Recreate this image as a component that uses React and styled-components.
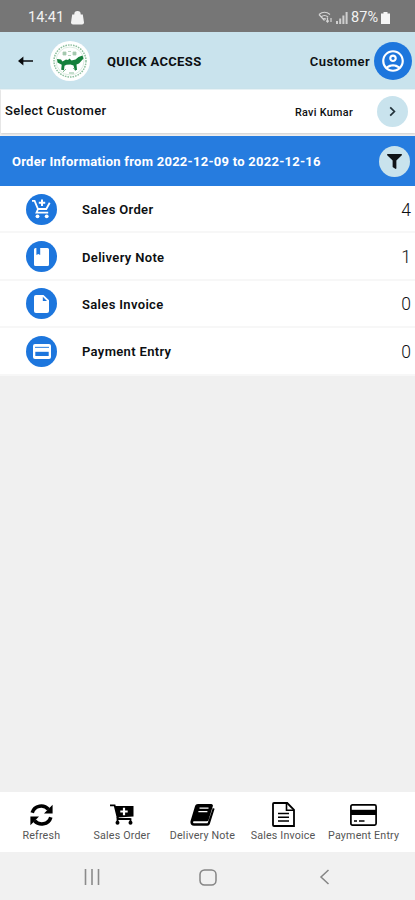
import styled, { createGlobalStyle } from "styled-components";
import { FaFilter } from "react-icons/fa";
import { MdOutlineAccountCircle } from "react-icons/md";

const GlobalStyle = createGlobalStyle`
    * {
        box-sizing: border-box;
    }

    body {
        margin: 0;
        background: #f0f0f0;
        font-family: Roboto, "Liberation Sans", sans-serif;
    }
`;

const Screen = styled.div`
    width: 415px;
    height: 900px;
    display: flex;
    flex-direction: column;
    overflow: hidden;
    background: #f0f0f0;
    color: #0c0f12;

    && svg {
        display: block;
        flex-shrink: 0;
    }
`;

const StatusBar = styled.div`
    height: 32px;
    padding: 3px 25px 0 28px;
    display: flex;
    align-items: center;
    justify-content: space-between;
    background: #767676;
    color: #f2f2f2;
    font-size: 14.5px;
`;

const StatusGroup = styled.div`
    display: flex;
    align-items: center;
    column-gap: ${props => props.gap};
`;

const Header = styled.header`
    height: 57px;
    padding: 1px 3px 0 18px;
    display: flex;
    align-items: center;
    background: #c9e3ed;
`;

const Logo = styled.div`
    width: 40px;
    height: 40px;
    margin-left: 17px;
    display: flex;
    align-items: center;
    justify-content: center;
    border-radius: 50%;
    background: white;
`;

const Title = styled.h1`
    margin: 0 auto 0 17px;
    font-size: 13px;
    font-weight: 700;
    letter-spacing: 0.35px;
    white-space: nowrap;
`;

const Role = styled.span`
    margin-right: 4px;
    font-size: 13px;
    font-weight: 600;
    letter-spacing: 0.4px;
`;

const Round = styled.div`
    width: ${props => props.size}px;
    height: ${props => props.size}px;
    flex-shrink: 0;
    display: flex;
    align-items: center;
    justify-content: center;
    border-radius: 50%;
    background: ${props => props.light ? "#c9e3ed" : "#1d76dd"};
    color: ${props => props.light ? "#101417" : "white"};
`;

const SelectRow = styled.div`
    height: 44px;
    margin: 0 0 3px 1px;
    padding: 0 7px 0 4px;
    display: flex;
    align-items: center;
    background: white;
    border-top: 1px solid #e8f2f5;
    box-shadow: 0 1px 2px #cfcfcf;
`;

const SelectLabel = styled.span`
    margin: 0 auto 3px 0;
    font-size: 13px;
    font-weight: 500;
    letter-spacing: 0.34px;
`;

const SelectValue = styled.span`
    margin: 2px 24px 0 0;
    font-size: 10.8px;
    font-weight: 500;
    letter-spacing: 0.3px;
`;

const Period = styled.div`
    height: 50px;
    padding: 0 5px 0 12px;
    display: flex;
    align-items: center;
    justify-content: space-between;
    background: #267cdf;
    color: white;
    font-size: 13px;
    font-weight: 700;
    letter-spacing: 0.26px;
`;

const List = styled.div`
    display: flex;
    flex-direction: column;
    background: white;
`;

const Row = styled.div`
    height: 47.4px;
    padding: 1px 4px 0 26px;
    display: flex;
    align-items: center;
    border-bottom: 2px solid #f7f7f7;
`;

const RowName = styled.span`
    margin: 1px auto 0 25px;
    font-size: 13px;
    font-weight: 600;
    letter-spacing: 0.34px;
`;

const RowCount = styled.span`
    margin-top: 1px;
    font-size: 17.5px;
    font-weight: 300;
`;

const TabBar = styled.nav`
    height: 60px;
    margin-top: auto;
    display: grid;
    grid-template-columns: repeat(5, 80.6px);
    padding: 9px 0 0 1px;
    background: white;
`;

const Tab = styled.div`
    display: flex;
    flex-direction: column;
    align-items: center;
    row-gap: 2px;
    color: black;
`;

const TabIcon = styled.div`
    height: 27px;
    display: flex;
    align-items: center;
`;

const TabName = styled.span`
    color: #555;
    font-size: 10.7px;
    line-height: 12px;
    letter-spacing: 0.18px;
    white-space: nowrap;
`;

const SystemNav = styled.div`
    height: 48px;
    padding: 2px 85px 0 84px;
    display: grid;
    grid-template-columns: 115px 1fr auto;
    align-items: center;
    background: #f1f1f1;
`;

const BagIcon = () => (
    <svg width="13" height="14" viewBox="0 0 13 14">
        <path d="M4 4.5V3.2a2.5 2.5 0 0 1 5 0v1.3" fill="#f2f2f2" stroke="#f2f2f2" strokeWidth="1.4" />
        <path d="M1.2 3.4h10.6L13 11.5a2 2 0 0 1-2 2H2a2 2 0 0 1-2-2z" fill="#f2f2f2" />
    </svg>
);

const WifiIcon = () => (
    <svg width="15" height="13" viewBox="0 0 15 13" fill="none" stroke="#d5d5d5" strokeWidth="1.2">
        <path d="M1 3.5Q6.5-1 12 3.5M3 6Q6.5 3 10 6M5 8.3q1.5-1.2 3 0" />
        <path d="M1 3.5 6.5 9.5M9.5 6.5v4.5M8.2 9.7l1.3 1.5 1.3-1.5M13 11V7" />
    </svg>
);

const SignalIcon = () => (
    <svg width="12" height="12" viewBox="0 0 12 12" fill="#cfcfcf">
        <path d="M0 9h2v3H0zM3.2 6.5h2V12h-2zM6.4 3.5h2V12h-2zM9.6 0h2v12h-2z" />
    </svg>
);

const BatteryIcon = () => (
    <svg width="9" height="12" viewBox="0 0 9 12">
        <path d="M2.5 0h4v1.5H9V12H0V1.5h2.5z" fill="#f5f5f5" />
    </svg>
);

const BackIcon = () => (
    <svg width="15" height="10" viewBox="0 0 15 10">
        <path d="M4 5h11" stroke="#15191c" strokeWidth="1.6" />
        <path d="M0 5 5.4.6v8.8z" fill="#080a0c" />
    </svg>
);

const EmblemIcon = () => (
    <svg width="38" height="38" viewBox="0 0 38 38">
        <circle cx="19" cy="19" r="16" fill="none" stroke="#8fc0a0" strokeWidth="1.5" strokeDasharray="1.6 1" />
        <circle cx="19" cy="19" r="14" fill="none" stroke="#c3ddcb" strokeWidth=".6" />
        <path d="M12 10h3v3h-3zm10 0h3v3h-3zM17 9.5h3m-3 4h3" fill="#a4c8ae" stroke="#a4c8ae" strokeWidth=".8" />
        <path d="M6 17l4 .5 1.5 2 3.5-2 2 .5 1.5-1.5 2 2 4-1 3-2.5 4-1.5 1 3-4.5 5-2.5 1 .5 5.5-2.2.3-1.3-4.8-3-1-4 .2-2 1-.5 4.5-2.8-.4.5-5-4.2-2.3z" fill="#15803c" />
        <path d="M12 30l3-3m10 2-3-3m-4 5h5" fill="none" stroke="#7eb58e" strokeWidth=".9" />
    </svg>
);

const ChevronIcon = () => (
    <svg width="7" height="11" viewBox="0 0 7 11">
        <path d="M1.2 1.3 5.4 5.5 1.2 9.7" fill="none" stroke="#22323a" strokeWidth="1.7" />
    </svg>
);

const CartIcon = () => (
    <svg width="19" height="20" viewBox="0 0 19 20" fill="none" stroke="white" strokeWidth="1.8">
        <path d="M0 1.8h2.6L6 10h8.3l3.4-6.3" />
        <path d="M6 10l-1.5 3.6h11.7" />
        <path d="M10 .5v6.6M6.8 3.8h6.4" strokeWidth="2" />
        <circle cx="5.5" cy="17.3" r="1.9" fill="white" stroke="none" />
        <circle cx="14.7" cy="17.3" r="1.9" fill="white" stroke="none" />
    </svg>
);

const NoteIcon = () => (
    <svg width="15" height="18" viewBox="0 0 15 18">
        <path d="M1.5 0h12A1.5 1.5 0 0 1 15 1.5v15a1.5 1.5 0 0 1-1.5 1.5h-12A1.5 1.5 0 0 1 0 16.5v-15A1.5 1.5 0 0 1 1.5 0z" fill="white" />
        <path d="M2.4 0h3.8v7L4.3 6 2.4 7z" fill="#1d76dd" />
    </svg>
);

const PageIcon = () => (
    <svg width="15" height="18" viewBox="0 0 15 18">
        <path d="M2 0h7.5L15 5.3V16a2 2 0 0 1-2 2H2a2 2 0 0 1-2-2V2a2 2 0 0 1 2-2z" fill="white" />
        <path d="M8.8 1.8v4.1h4.2z" fill="#1d76dd" />
    </svg>
);

const CardIcon = () => (
    <svg width="18" height="15" viewBox="0 0 18 15">
        <rect width="18" height="15" rx="2" fill="white" />
        <path d="M2 3.4h14" stroke="#4a92e4" strokeWidth="1.2" />
        <path d="M2.3 7.8h13.4v4.2H2.3z" fill="#1d76dd" />
    </svg>
);

const RefreshIcon = () => (
    <svg width="23" height="22" viewBox="0 0 23 22">
        <path d="M2.2 8.8C4.4 1 14 .2 18.4 5.2M20.8 13.2C18.6 21 9 21.8 4.6 16.8" fill="none" stroke="black" strokeWidth="3.6" />
        <path d="M22.6.8v8.6H14zM.4 21.2v-8.6H9z" fill="black" />
    </svg>
);

const TrolleyIcon = () => (
    <svg width="24" height="21" viewBox="0 0 24 21">
        <path d="M0 1.3h4.6L8 15h12.5" fill="none" stroke="black" strokeWidth="1.8" />
        <path d="M4.8 2H23.5v10.5L7.3 13.5z" fill="black" />
        <path d="M14 3.8v7.4M10.3 7.5h7.4" stroke="white" strokeWidth="2.2" />
        <path d="M7.5 13v5M20.5 14.2v3.5" stroke="black" strokeWidth="1.8" />
        <circle cx="7.5" cy="18.7" r="2" fill="black" />
        <circle cx="20.5" cy="18.7" r="2" fill="black" />
    </svg>
);

const BookIcon = () => (
    <svg width="25" height="22" viewBox="0 0 25 22">
        <path d="M8 0h13.2a1.7 1.7 0 0 1 1.6 2.3L18.5 16a2 2 0 0 1-2 1.3H4.2c-1.5 0-1.7 2 .2 2h13.2L22.8 4l1.8.8-4.8 15.1a2.5 2.5 0 0 1-2.4 1.8H4C1 21.7-.2 19 .7 16.5L5 2.2C5.5.8 6.5 0 8 0z" fill="black" />
        <path d="M9.5 4.2h9M8.4 7.7h9" stroke="white" strokeWidth="1.3" />
    </svg>
);

const InvoiceIcon = () => (
    <svg width="23" height="25" viewBox="0 0 23 25" fill="none" stroke="black">
        <path d="M2 1h13.2L22 7.8V24H2a1 1 0 0 1-1-1V2a1 1 0 0 1 1-1z" strokeWidth="1.8" />
        <path d="M14.5 1v7.3H22" strokeWidth="1.6" />
        <path d="M6 11.5h11M6 15.3h11M6 19h11" strokeWidth="1.6" />
    </svg>
);

const PaymentIcon = () => (
    <svg width="27" height="22" viewBox="0 0 27 22">
        <rect x=".9" y=".9" width="25.2" height="20.2" rx="1.5" fill="none" stroke="black" strokeWidth="1.7" />
        <path d="M1 5.8h25v5.2H1z" fill="black" />
        <path d="M4 17h3M9 17h5.5" stroke="black" strokeWidth="1.4" />
    </svg>
);

const orders = [
    { name: "Sales Order", count: 4, icon: <CartIcon /> },
    { name: "Delivery Note", count: 1, icon: <NoteIcon /> },
    { name: "Sales Invoice", count: 0, icon: <PageIcon /> },
    { name: "Payment Entry", count: 0, icon: <CardIcon /> }
];

const tabs = [
    { name: "Refresh", icon: <RefreshIcon /> },
    { name: "Sales Order", icon: <TrolleyIcon /> },
    { name: "Delivery Note", icon: <BookIcon /> },
    { name: "Sales Invoice", icon: <InvoiceIcon /> },
    { name: "Payment Entry", icon: <PaymentIcon /> }
];

const App = () => {
    return (
        <Screen>
            <GlobalStyle />
            <StatusBar>
                <StatusGroup gap="7px">
                    <span>14:41</span>
                    <BagIcon />
                </StatusGroup>
                <StatusGroup gap="3px">
                    <WifiIcon />
                    <SignalIcon />
                    <span>87%</span>
                    <BatteryIcon />
                </StatusGroup>
            </StatusBar>

            <Header>
                <BackIcon />
                <Logo>
                    <EmblemIcon />
                </Logo>
                <Title>QUICK ACCESS</Title>
                <Role>Customer</Role>
                <Round size={38}>
                    <MdOutlineAccountCircle size={26} />
                </Round>
            </Header>

            <SelectRow>
                <SelectLabel>Select Customer</SelectLabel>
                <SelectValue>Ravi Kumar</SelectValue>
                <Round size={31} light>
                    <ChevronIcon />
                </Round>
            </SelectRow>

            <Period>
                <span>Order Information from 2022-12-09 to 2022-12-16</span>
                <Round size={31} light>
                    <FaFilter size={15} />
                </Round>
            </Period>

            <List>
                {orders.map(order => (
                    <Row key={order.name}>
                        <Round size={31}>{order.icon}</Round>
                        <RowName>{order.name}</RowName>
                        <RowCount>{order.count}</RowCount>
                    </Row>
                ))}
            </List>

            <TabBar>
                {tabs.map(tab => (
                    <Tab key={tab.name}>
                        <TabIcon>{tab.icon}</TabIcon>
                        <TabName>{tab.name}</TabName>
                    </Tab>
                ))}
            </TabBar>

            <SystemNav>
                <svg width="16" height="16" viewBox="0 0 16 16">
                    <path d="M1.5 0v16M8 0v16M14.5 0v16" stroke="#8b8b8b" strokeWidth="1.6" />
                </svg>
                <svg width="18" height="17" viewBox="0 0 18 17">
                    <rect x="1" y="1" width="16" height="15" rx="4.5" fill="none" stroke="#858585" strokeWidth="1.5" />
                </svg>
                <svg width="11" height="16" viewBox="0 0 11 16">
                    <path d="M9.5 1 2 8l7.5 7" fill="none" stroke="#858585" strokeWidth="1.5" />
                </svg>
            </SystemNav>
        </Screen>
    );
}

export default App;
